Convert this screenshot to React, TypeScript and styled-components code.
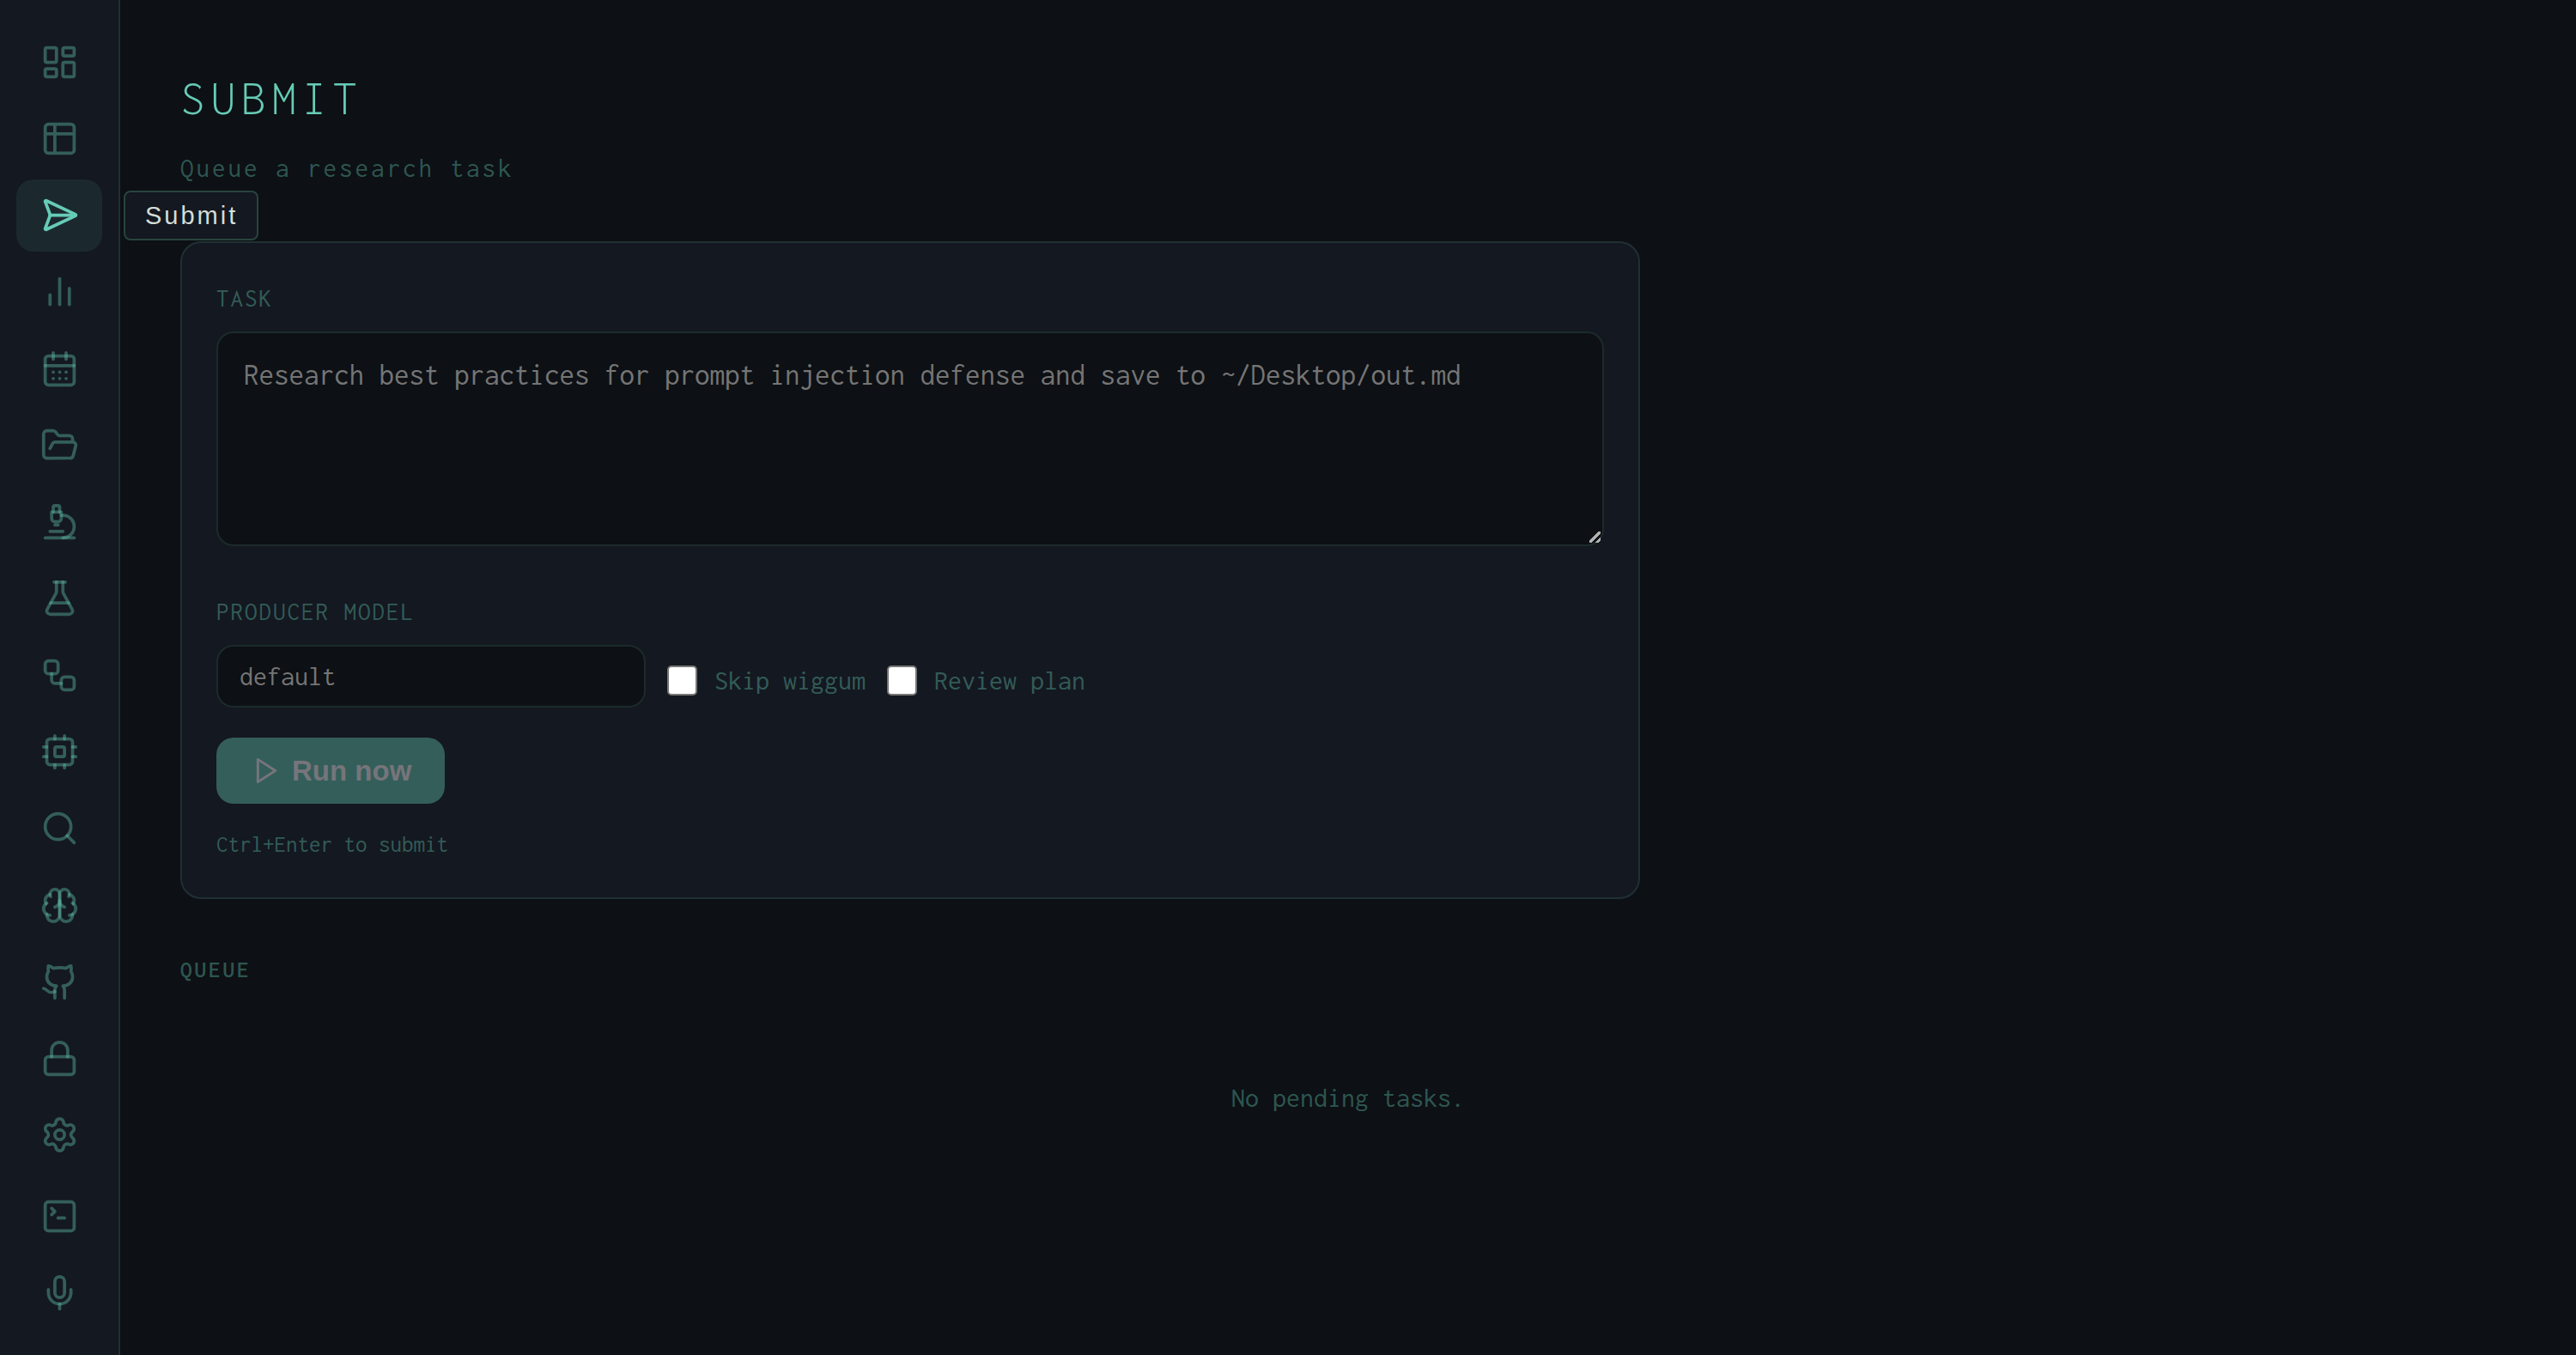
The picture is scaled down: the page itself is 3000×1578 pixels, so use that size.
import React, { useState } from "react";
import styled, { createGlobalStyle, css } from "styled-components";
import {
  CalendarDays,
  FlaskConical,
  FolderOpen,
  Github,
  LayoutDashboard,
  Lock,
  Mic,
  Microscope,
  Search,
  SendHorizontal,
  Settings,
  SquareTerminal,
  Table2,
  Workflow,
} from "lucide-react";

const color = {
  page: "#0d1014",
  panel: "#141820",
  accent: "#66cbb7",
  muted: "rgba(100, 200, 180, 0.4)",
  tint: "rgba(100, 200, 180, 0.1)",
  line: "rgba(100, 200, 180, 0.14)",
  fieldLine: "rgba(100, 200, 150, 0.11)",
  placeholder: "#757575",
};

const mono = `"Inconsolata", "Noto Sans Mono CJK SC", "DejaVu Sans Mono", monospace`;
const sans = `"Liberation Sans", Arial, sans-serif`;

const GlobalStyle = createGlobalStyle`
  *, *::before, *::after { box-sizing: border-box; }
  body {
    margin: 0;
    background: ${color.page};
    font-family: ${mono};
    color: ${color.muted};
  }
`;

const Shell = styled.div`
  display: flex;
  align-items: flex-start;
  min-height: 100vh;
`;

const Sidebar = styled.nav`
  position: sticky;
  top: 0;
  flex: none;
  display: flex;
  flex-direction: column;
  gap: 10px;
  width: 140px;
  height: 100vh;
  padding: 30px 19px 31px;
  background: ${color.panel};
  border-right: 2px solid ${color.line};
`;

const NavGroup = styled.div<{ $grow?: boolean }>`
  display: flex;
  flex-direction: column;
  gap: 5px;
  ${(p) =>
    p.$grow &&
    css`
      flex: 1;
      gap: 0;
      justify-content: space-between;
    `}
`;

const NavLink = styled.a<{ $active?: boolean }>`
  position: relative;
  display: flex;
  align-items: center;
  justify-content: center;
  height: 84px;
  border-radius: 20px;
  color: ${(p) => (p.$active ? color.accent : color.muted)};
  background: ${(p) => (p.$active ? color.tint : "transparent")};
  text-decoration: none;
`;

const Tooltip = styled.span`
  position: absolute;
  left: calc(100% + 25px);
  top: 50%;
  transform: translateY(-50%);
  z-index: 2;
  padding: 8px 22px 8px 23px;
  border: 2px solid #28443f;
  border-radius: 8px;
  background: ${color.panel};
  color: #d4ddd8;
  font: 400 29px/38px ${sans};
  letter-spacing: 3px;
  white-space: nowrap;
`;

const Main = styled.main`
  flex: 1;
  min-width: 0;
  padding: 82px 70px 70px;
`;

const Title = styled.h1`
  margin: 0;
  color: ${color.accent};
  font-size: 57px;
  font-weight: 300;
  line-height: 64px;
  letter-spacing: 7px;
`;

const Subtitle = styled.p`
  margin: 26px 0 61px;
  font-size: 31px;
  line-height: 48px;
  letter-spacing: 3px;
`;

const Card = styled.form`
  max-width: 1700px;
  padding: 40px;
  border: 2px solid ${color.line};
  border-radius: 24px;
  background: ${color.panel};
`;

const FieldLabel = styled.label`
  display: block;
  margin-bottom: 14px;
  font-size: 29px;
  line-height: 49px;
  letter-spacing: 2px;
`;

const fieldStyle = css`
  display: block;
  border: 2px solid ${color.fieldLine};
  border-radius: 20px;
  background: ${color.page};
  background-clip: padding-box;
  color: #d4ddd8;
  font-family: ${mono};
  outline: none;
  &::placeholder {
    color: ${color.placeholder};
  }
`;

const TaskInput = styled.textarea`
  ${fieldStyle}
  width: 100%;
  height: 250px;
  padding: 22px 30px;
  font-size: 35px;
  line-height: 54px;
  resize: vertical;
  &::-webkit-resizer {
    background: linear-gradient(
        135deg,
        transparent 41%,
        #b0b0b0 41%,
        #b0b0b0 58%,
        transparent 58%,
        transparent 74%,
        #b0b0b0 74%,
        #b0b0b0 90%,
        transparent 90%
      )
      left top / 13px 13px no-repeat;
  }
`;

const OptionsRow = styled.div`
  display: flex;
  flex-wrap: wrap;
  align-items: flex-end;
  gap: 25px;
  margin: 52px 0 35px;
`;

const ModelField = styled.div`
  width: 500px;
`;

const ModelInput = styled.input`
  ${fieldStyle}
  width: 100%;
  height: 73px;
  padding: 0 25px;
  font-size: 32px;
`;

const CheckLabel = styled.label`
  display: flex;
  align-items: center;
  gap: 20px;
  height: 63px;
  font-size: 32px;
`;

const Checkbox = styled.input`
  flex: none;
  width: 35px;
  height: 35px;
  margin: 0;
  appearance: none;
  border: 2px solid #767676;
  border-radius: 5px;
  background: #ffffff;
  &:checked {
    background: ${color.accent};
    box-shadow: inset 0 0 0 6px #ffffff;
  }
`;

const RunButton = styled.button`
  display: flex;
  align-items: center;
  gap: 12px;
  height: 77px;
  padding: 0 39px 0 41px;
  border: 0;
  border-radius: 20px;
  background: #345e5a;
  color: #76757b;
  font: 700 33px/40px ${sans};
`;

const Hint = styled.p`
  margin: 25px 0 0;
  font-size: 27px;
  line-height: 44px;
`;

const QueueTitle = styled.h2`
  margin: 60px 0 0;
  font-size: 27px;
  font-weight: 600;
  line-height: 44px;
  letter-spacing: 3px;
`;

const EmptyState = styled.p`
  margin: 0;
  padding: 102px 40px;
  font-size: 32px;
  line-height: 52px;
  text-align: center;
`;

type IconProps = { size?: number; strokeWidth?: number };

const Glyph = ({ size = 45, strokeWidth = 2, children }: IconProps & { children: React.ReactNode }) => (
  <svg
    width={size}
    height={size}
    viewBox="0 0 24 24"
    fill="none"
    stroke="currentColor"
    strokeWidth={strokeWidth}
    strokeLinecap="round"
    strokeLinejoin="round"
    aria-hidden="true"
  >
    {children}
  </svg>
);

const Bars = (p: IconProps) => (
  <Glyph {...p}>
    <path d="M18 20V10" />
    <path d="M12 20V4" />
    <path d="M6 20v-6" />
  </Glyph>
);

const Chip = (p: IconProps) => (
  <Glyph {...p}>
    <rect width="16" height="16" x="4" y="4" rx="2" />
    <rect width="6" height="6" x="9" y="9" rx="1" />
    <path d="M15 2v2" />
    <path d="M15 20v2" />
    <path d="M2 15h2" />
    <path d="M2 9h2" />
    <path d="M20 15h2" />
    <path d="M20 9h2" />
    <path d="M9 2v2" />
    <path d="M9 20v2" />
  </Glyph>
);

const BrainIcon = (p: IconProps) => (
  <Glyph {...p}>
    <path d="M12 5a3 3 0 1 0-5.997.125 4 4 0 0 0-2.526 5.77 4 4 0 0 0 .556 6.588A4 4 0 1 0 12 18Z" />
    <path d="M12 5a3 3 0 1 1 5.997.125 4 4 0 0 1 2.526 5.77 4 4 0 0 1-.556 6.588A4 4 0 1 1 12 18Z" />
    <path d="M15 13a4.5 4.5 0 0 1-3-4 4.5 4.5 0 0 1-3 4" />
    <path d="M17.599 6.5a3 3 0 0 0 .399-1.375" />
    <path d="M6.003 5.125A3 3 0 0 0 6.401 6.5" />
    <path d="M3.477 10.896a4 4 0 0 1 .585-.396" />
    <path d="M19.938 10.5a4 4 0 0 1 .585.396" />
    <path d="M6 18a4 4 0 0 1-1.967-.516" />
    <path d="M19.967 17.484A4 4 0 0 1 18 18" />
  </Glyph>
);

const PlayIcon = (p: IconProps) => (
  <Glyph {...p}>
    <polygon points="5 3 19 12 5 21 5 3" />
  </Glyph>
);

const primary = [
  { name: "Dashboard", Icon: LayoutDashboard },
  { name: "Tables", Icon: Table2 },
  { name: "Submit", Icon: SendHorizontal },
  { name: "Analytics", Icon: Bars },
  { name: "Schedule", Icon: CalendarDays },
  { name: "Files", Icon: FolderOpen },
  { name: "Research", Icon: Microscope },
  { name: "Experiments", Icon: FlaskConical },
  { name: "Workflows", Icon: Workflow },
  { name: "Models", Icon: Chip },
  { name: "Search", Icon: Search },
  { name: "Memory", Icon: BrainIcon },
  { name: "GitHub", Icon: Github },
  { name: "Security", Icon: Lock },
  { name: "Settings", Icon: Settings },
];

const secondary = [
  { name: "Terminal", Icon: SquareTerminal },
  { name: "Voice", Icon: Mic },
];

const current = "Submit";

const NavItem = ({ name, Icon }: { name: string; Icon: React.ComponentType<IconProps> }) => (
  <NavLink href={`#${name.toLowerCase()}`} aria-label={name} $active={name === current}>
    <Icon size={45} strokeWidth={2} />
    {name === current && <Tooltip role="tooltip">{name}</Tooltip>}
  </NavLink>
);

export default function App() {
  const [task, setTask] = useState("");
  const [model, setModel] = useState("");

  return (
    <>
      <GlobalStyle />
      <Shell>
        <Sidebar aria-label="Main">
          <NavGroup $grow>
            {primary.map((item) => (
              <NavItem key={item.name} {...item} />
            ))}
          </NavGroup>
          <NavGroup>
            {secondary.map((item) => (
              <NavItem key={item.name} {...item} />
            ))}
          </NavGroup>
        </Sidebar>
        <Main>
          <Title>SUBMIT</Title>
          <Subtitle>Queue a research task</Subtitle>
          <Card onSubmit={(e) => e.preventDefault()}>
            <FieldLabel htmlFor="task">TASK</FieldLabel>
            <TaskInput
              id="task"
              value={task}
              onChange={(e) => setTask(e.target.value)}
              placeholder="Research best practices for prompt injection defense and save to ~/Desktop/out.md"
            />
            <OptionsRow>
              <ModelField>
                <FieldLabel htmlFor="model">PRODUCER MODEL</FieldLabel>
                <ModelInput
                  id="model"
                  type="text"
                  value={model}
                  onChange={(e) => setModel(e.target.value)}
                  placeholder="default"
                />
              </ModelField>
              <CheckLabel>
                <Checkbox type="checkbox" />
                Skip wiggum
              </CheckLabel>
              <CheckLabel>
                <Checkbox type="checkbox" />
                Review plan
              </CheckLabel>
            </OptionsRow>
            <RunButton type="submit" disabled={!task.trim()}>
              <PlayIcon size={35} />
              Run now
            </RunButton>
            <Hint>Ctrl+Enter to submit</Hint>
          </Card>
          <QueueTitle>QUEUE</QueueTitle>
          <EmptyState>No pending tasks.</EmptyState>
        </Main>
      </Shell>
    </>
  );
}
